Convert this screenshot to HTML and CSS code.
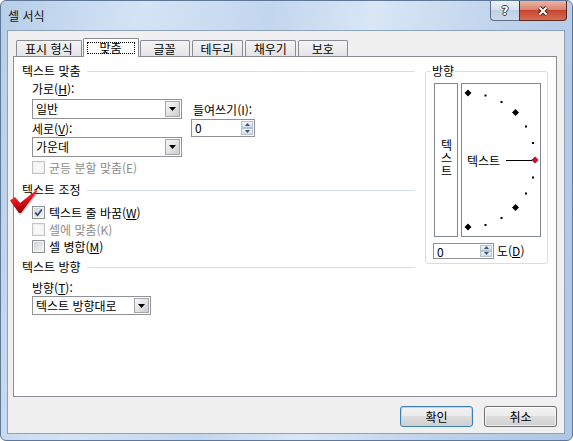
FILE: index.html
```html
<!DOCTYPE html>
<html lang="ko">
<head>
<meta charset="utf-8">
<title>셀 서식</title>
<link rel="stylesheet" href="styles.css">
</head>
<body>
<div class="window">
  <div class="titlebar">
    <span class="title">셀 서식</span>
    <div class="caption">
      <div class="cap help"><span class="qmark">?</span></div>
      <div class="cap close">
        <svg width="12" height="10" viewBox="0 0 12 10"><path d="M2.5 1.5 L9.5 8.5 M9.5 1.5 L2.5 8.5" stroke="#4b1d15" stroke-width="4"/><path d="M2.5 1.5 L9.5 8.5 M9.5 1.5 L2.5 8.5" stroke="#fff" stroke-width="2"/></svg>
      </div>
    </div>
  </div>
  <div class="client">
    <div class="tabs">
      <div class="tab">표시 형식</div>
      <div class="tab active"><span class="focus">맞춤</span></div>
      <div class="tab">글꼴</div>
      <div class="tab">테두리</div>
      <div class="tab">채우기</div>
      <div class="tab">보호</div>
    </div>
    <div class="panel">
      <div class="left">
        <div class="group-head"><span>텍스트 맞춤</span></div>
        <div class="align-grid">
          <div class="label lbl-h">가로(<u>H</u>):</div>
          <div class="combo combo-h">
            <span class="combo-val">일반</span>
            <span class="combo-btn"><svg width="7" height="4" viewBox="0 0 7 4"><path d="M0 0H7L3.5 4Z"/></svg></span>
          </div>
          <div class="label lbl-indent">들여쓰기(I):</div>
          <div class="label lbl-v">세로(<u>V</u>):</div>
          <div class="spin spin-indent">
            <span class="spin-val">0</span>
            <span class="spin-btns">
              <span><svg width="5" height="3" viewBox="0 0 5 3"><path d="M0 3H5L2.5 0Z"/></svg></span>
              <span><svg width="5" height="3" viewBox="0 0 5 3"><path d="M0 0H5L2.5 3Z"/></svg></span>
            </span>
          </div>
          <div class="combo combo-v">
            <span class="combo-val">가운데</span>
            <span class="combo-btn"><svg width="7" height="4" viewBox="0 0 7 4"><path d="M0 0H7L3.5 4Z"/></svg></span>
          </div>
        </div>
        <div class="check disabled first"><span class="cb"></span><span>균등 분할 맞춤(E)</span></div>

        <div class="group-head gh2"><span>텍스트 조정</span></div>
        <div class="checks">
          <div class="check"><span class="cb"><svg width="9" height="9" viewBox="0 0 9 9"><path d="M1.2 4.6 L3.6 7.2 L7.8 1.6" fill="none" stroke="#2c4a78" stroke-width="1.7"/></svg></span><span>텍스트 줄 바꿈(<u>W</u>)</span></div>
          <div class="check disabled"><span class="cb"></span><span>셀에 맞춤(K)</span></div>
          <div class="check"><span class="cb"></span><span>셀 병합(<u>M</u>)</span></div>
        </div>

        <div class="group-head gh3"><span>텍스트 방향</span></div>
        <div class="label dir-label">방향(<u>T</u>):</div>
        <div class="combo short">
          <span class="combo-val">텍스트 방향대로</span>
          <span class="combo-btn"><svg width="7" height="4" viewBox="0 0 7 4"><path d="M0 0H7L3.5 4Z"/></svg></span>
        </div>
      </div>

      <fieldset class="orient">
        <legend>방향</legend>
        <div class="orient-row">
          <div class="vbox"><span class="vtext">텍스트</span></div>
          <div class="dial">
            <svg class="dial-svg" width="78" height="152" viewBox="0 0 78 152">
              <g fill="#000">
                <path d="M6 5.5 L9.5 9 L6 12.5 L2.5 9Z"/>
                <rect x="22.5" y="10.5" width="2" height="2"/>
                <rect x="38.5" y="17" width="2" height="2"/>
                <path d="M53.5 25 L57 28.5 L53.5 32 L50 28.5Z"/>
                <rect x="63" y="41.5" width="2" height="2"/>
                <rect x="70" y="58" width="2" height="2"/>
                <rect x="70" y="92.5" width="2" height="2"/>
                <rect x="63" y="108.5" width="2" height="2"/>
                <path d="M53.5 120 L57 123.5 L53.5 127 L50 123.5Z"/>
                <rect x="38.5" y="133" width="2" height="2"/>
                <rect x="22.5" y="140" width="2" height="2"/>
                <path d="M6 139.5 L9.5 143 L6 146.5 L2.5 143Z"/>
              </g>
              <text class="dial-text" x="5" y="81.5">텍스트</text>
              <line x1="44" y1="76.5" x2="70" y2="76.5" stroke="#000" stroke-width="1"/>
              <path d="M73 72.8 L76.2 76 L73 79.2 L69.8 76Z" fill="#c8102e" stroke="#6b0010" stroke-width="0.6"/>
            </svg>
          </div>
        </div>
        <div class="deg-row">
          <div class="spin deg">
            <span class="spin-val">0</span>
            <span class="spin-btns">
              <span><svg width="5" height="3" viewBox="0 0 5 3"><path d="M0 3H5L2.5 0Z"/></svg></span>
              <span><svg width="5" height="3" viewBox="0 0 5 3"><path d="M0 0H5L2.5 3Z"/></svg></span>
            </span>
          </div>
          <span class="label">도(<u>D</u>)</span>
        </div>
      </fieldset>
    </div>
    <div class="buttons">
      <div class="btn default">확인</div>
      <div class="btn">취소</div>
    </div>
  </div>
  <svg class="annot" width="30" height="26" viewBox="0 0 30 26">
    <defs>
      <linearGradient id="redg" x1="0" y1="0" x2="0.3" y2="1">
        <stop offset="0" stop-color="#ff4a3a"/>
        <stop offset="0.55" stop-color="#e0101a"/>
        <stop offset="1" stop-color="#9a0008"/>
      </linearGradient>
    </defs>
    <path d="M1.5 12 L4 13.5 L10 16 L28 1.5 L28.5 3 L11.5 24.5 L9.5 25 Z" fill="#000" opacity="0.18"/>
    <path d="M0 10.5 L5 7 L10 13 L26.5 0 L27.5 1 L11 23 L9 23 Z" fill="url(#redg)"/>
  </svg>
</div>
</body>
</html>
```

FILE: styles.css
```css
* {
  box-sizing: border-box;
}

html, body {
  margin: 0;
  padding: 0;
}

body {
  width: 573px;
  height: 441px;
  overflow: hidden;
  background: #ffffff;
  font-family: "Noto Sans CJK KR", "Noto Sans", sans-serif;
  font-size: 12px;
  color: #000;
}

u {
  text-decoration: underline;
  text-underline-offset: 1px;
}

.window {
  position: relative;
  width: 573px;
  height: 441px;
  border: 1px solid #5f7897;
  border-radius: 6px;
  background: linear-gradient(100deg, #b7cee9 0%, #d4e4f5 22%, #c2d6ed 42%, #d9e7f6 58%, #bcd1ea 80%, #aec7e4 100%);
  padding: 0 7px 6px 6px;
  display: flex;
  flex-direction: column;
}

/* title bar */
.titlebar {
  height: 29px;
  display: flex;
  align-items: center;
  justify-content: space-between;
  flex: none;
}

.title {
  padding-left: 1px;
  line-height: 16px;
  color: #111;
}

.caption {
  align-self: flex-start;
  display: flex;
  margin-right: -2px;
}

.cap {
  height: 20px;
  border: 1px solid #5d6e85;
  border-top: none;
  display: flex;
  align-items: center;
  justify-content: center;
}

.help {
  width: 29px;
  border-right: none;
  border-radius: 0 0 0 4px;
  background: linear-gradient(#edf2f8 0%, #d6e1ee 45%, #bfd0e3 50%, #cadaeb 100%);
}

.qmark {
  font-family: "DejaVu Sans", sans-serif;
  font-weight: bold;
  font-size: 12px;
  line-height: 12px;
  color: #fff;
  text-shadow: 1px 0 0 #2d3d52, -1px 0 0 #2d3d52, 0 1px 0 #2d3d52, 0 -1px 0 #2d3d52;
}

.close {
  width: 48px;
  border-color: #5b2a22;
  border-radius: 0 0 4px 0;
  background: linear-gradient(#efb4a5 0%, #da8471 45%, #c7462d 50%, #d66c52 100%);
}

/* client area */
.client {
  flex: 1;
  border: 1px solid #8ca1bb;
  background: #f0f0f0;
  display: flex;
  flex-direction: column;
}

.tabs {
  display: flex;
  align-items: flex-end;
  gap: 2px;
  height: 18px;
  margin: 7px 0 0 8px;
  position: relative;
  z-index: 1;
  flex: none;
}

.tab {
  height: 16px;
  min-width: 50px;
  padding: 0 8px;
  border: 1px solid #898c95;
  border-bottom: none;
  border-radius: 2px 2px 0 0;
  background: linear-gradient(#f4f4f4, #e4e4e4);
  display: flex;
  align-items: center;
  justify-content: center;
  line-height: 14px;
  white-space: nowrap;
}

.tab.active {
  height: 19px;
  min-width: 56px;
  margin: 0 -1px -1px;
  padding: 3px 3px 3px;
  background: #ffffff;
  align-items: stretch;
}

.focus {
  flex: 1;
  border: 1px dotted #000;
  display: flex;
  align-items: center;
  justify-content: center;
  line-height: 12px;
}

.panel {
  flex: 1;
  margin: 0 7px 0 5px;
  border: 1px solid #898c95;
  background: #ffffff;
  display: flex;
  gap: 10px;
  padding: 0 7px 0 8px;
}

.left {
  width: 393px;
  display: flex;
  flex-direction: column;
  padding-top: 6px;
}

.group-head {
  display: flex;
  align-items: center;
  gap: 6px;
  height: 16px;
  line-height: 16px;
}

.group-head::after {
  content: "";
  flex: 1;
  border-top: 1px solid #d5dfe5;
  margin-top: 1px;
}

.gh2 {
  margin-top: 6px;
}

.gh3 {
  margin-top: 4px;
}

.label {
  line-height: 17px;
  white-space: nowrap;
}

.align-grid {
  margin-top: 1px;
  margin-left: 10px;
  display: grid;
  grid-template-columns: 150px 64px;
  column-gap: 9px;
  grid-template-rows: 19px 20px 18px 20px;
  align-items: start;
}

.lbl-h {
  grid-area: 1 / 1;
}

.combo-h {
  grid-area: 2 / 1;
}

.lbl-indent {
  grid-area: 2 / 2;
  align-self: center;
  padding-left: 2px;
}

.lbl-v {
  grid-area: 3 / 1;
  align-self: center;
}

.spin-indent {
  grid-area: 3 / 2;
}

.combo-v {
  grid-area: 4 / 1;
}

.combo {
  display: flex;
  width: 150px;
  height: 20px;
  border: 1px solid #8f9296;
  background: #fff;
  padding: 1px;
}

.combo.short {
  width: 119px;
  height: 19px;
  margin-left: 10px;
}

.combo-val {
  flex: 1;
  padding-left: 2px;
  line-height: 16px;
  white-space: nowrap;
  overflow: hidden;
}

.combo-btn {
  width: 15px;
  border: 1px solid #a4a6aa;
  background: linear-gradient(135deg, #f8f8f8 0%, #e4e4e4 50%, #cdcdcd 100%);
  display: flex;
  align-items: center;
  justify-content: center;
}

.combo-btn svg {
  fill: #000;
  display: block;
}

.spin {
  display: flex;
  width: 64px;
  height: 18px;
  border: 1px solid #8f9296;
  background: #fff;
  padding: 1px;
}

.spin.deg {
  width: 61px;
  height: 16px;
}

.spin-val {
  flex: 1;
  padding-left: 2px;
  line-height: 14px;
}

.spin-btns {
  width: 12px;
  display: flex;
  flex-direction: column;
}

.spin-btns span {
  flex: 1;
  border: 1px solid #b7c3d1;
  background: linear-gradient(#f0f4f9, #d2dce8);
  display: flex;
  align-items: center;
  justify-content: center;
}

.spin-btns svg {
  fill: #3d5170;
  display: block;
}

.check {
  display: flex;
  align-items: center;
  gap: 4px;
  height: 17px;
  padding-left: 10px;
  line-height: 17px;
  white-space: nowrap;
}

.check.first {
  margin-top: 2px;
}

.checks {
  margin-top: 6px;
  display: flex;
  flex-direction: column;
}

.cb {
  width: 13px;
  height: 13px;
  flex: none;
  border: 1px solid #8e8f8f;
  background: linear-gradient(135deg, #c9cdd3 0%, #e6e8ea 60%, #f7f7f7 100%);
  box-shadow: inset 0 0 0 1px #f4f4f4;
  display: flex;
  align-items: center;
  justify-content: center;
}

.cb svg {
  display: block;
}

.check.disabled {
  color: #8d8d8d;
}

.check.disabled .cb {
  border-color: #c4c4c4;
  background: #f7f7f7;
  box-shadow: inset 0 0 0 1px #efefef;
}

.dir-label {
  margin-top: 4px;
  padding-left: 10px;
}

/* orientation group */
.orient {
  margin: 7px 0 0 0;
  padding: 5px 6px 4px 8px;
  border: 1px solid #d5dfe5;
  border-radius: 3px;
  width: 123px;
  min-width: 0;
  align-self: flex-start;
}

.orient legend {
  padding: 0 1px;
  margin-left: -3px;
  line-height: 14px;
}

.orient-row {
  display: flex;
  gap: 3px;
  height: 154px;
}

.vbox {
  width: 24px;
  border: 1px solid #828790;
  background: #fff;
  display: flex;
  align-items: center;
  justify-content: center;
}

.vtext {
  writing-mode: vertical-rl;
  text-orientation: upright;
  letter-spacing: 1px;
  line-height: 14px;
  margin-top: -3px;
}

.dial {
  width: 80px;
  border: 1px solid #828790;
  background: #fff;
}

.dial-svg {
  display: block;
}

.dial-text {
  font-family: "Noto Sans CJK KR", "Noto Sans", sans-serif;
  font-size: 12px;
  fill: #000;
}

.deg-row {
  display: flex;
  align-items: center;
  gap: 3px;
  margin-top: 5px;
  margin-left: -1px;
}

/* bottom buttons */
.buttons {
  display: flex;
  justify-content: flex-end;
  gap: 11px;
  padding: 9px 7px 6px 0;
  flex: none;
}

.btn {
  width: 73px;
  height: 21px;
  border: 1px solid #707070;
  border-radius: 3px;
  background: linear-gradient(#f2f2f2 0%, #ebebeb 49%, #dddddd 50%, #cfcfcf 100%);
  box-shadow: inset 0 0 0 1px rgba(255, 255, 255, 0.7);
  line-height: 19px;
  text-align: center;
}

.btn.default {
  border-color: #3c7fb1;
  box-shadow: inset 0 0 0 1px #a6def7;
}

/* red annotation check mark */
.annot {
  position: absolute;
  left: 9px;
  top: 189px;
}
```
